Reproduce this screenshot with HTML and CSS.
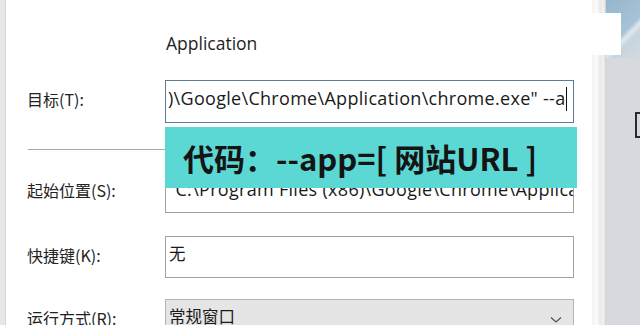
FILE: index.html
```html
<!DOCTYPE html>
<html lang="zh-CN">
<head>
  <meta charset="UTF-8">
  <title>快捷方式属性</title>
  <link rel="stylesheet" href="styles.css">
</head>
<body>
  <div class="screen">
    <div class="left-edge"></div>

    <!-- Shortcut properties panel -->
    <div class="panel">
      <div class="app-name">Application</div>

      <div class="row row-target">
        <label class="label">目标(T):</label>
        <div class="field field-focus">)\Google\Chrome\Application\chrome.exe" --a<span class="caret"></span></div>
      </div>

      <div class="separator"></div>

      <div class="row row-start">
        <label class="label">起始位置(S):</label>
        <div class="field">"C:\Program Files (x86)\Google\Chrome\Application"</div>
      </div>

      <div class="row row-key">
        <label class="label">快捷键(K):</label>
        <div class="field field-cjk">无</div>
      </div>

      <div class="row row-run">
        <label class="label">运行方式(R):</label>
        <div class="field field-cjk field-select">
          <span>常规窗口</span>
          <svg class="chevron" width="12" height="8" viewBox="0 0 12 8">
            <path d="M1 1.5 L6 6 L11 1.5" fill="none" stroke="#555" stroke-width="1.3"/>
          </svg>
        </div>
      </div>

      <!-- teal caption pasted over the screenshot -->
      <div class="caption">代码：--app=[ 网站URL ]</div>
    </div>

    <div class="frame-strip"></div>

    <div class="desktop">
      <div class="desktop-sky"></div>
      <div class="desktop-mark"></div>
    </div>

    <div class="top-patch"></div>
  </div>
</body>
</html>
```

FILE: styles.css
```css
body {
  margin: 0;
  padding: 0;
  background-color: #d7dadf;
  font-family: "Noto Sans", "Noto Sans CJK SC", sans-serif;
}

.screen {
  position: relative;
  display: flex;
  width: 640px;
  height: 325px;
  overflow: hidden;
}

.left-edge {
  width: 5px;
  background-color: #e7e7e7;
  border-right: 1px solid #d6d6d6;
}

.panel {
  position: relative;
  width: 565px;
  padding-left: 21px;
  background-color: #ffffff;
}

.app-name {
  margin: 31px 0 0 139px;
  height: 24px;
  font-family: "Open Sans", sans-serif;
  font-size: 17.5px;
  line-height: 24px;
  color: #1e1e1e;
}

.row {
  display: flex;
  align-items: flex-start;
}

.row-target {
  margin-top: 25px;
}

.row-start {
  margin-top: 21px;
}

.row-key {
  margin-top: 23px;
}

.row-run {
  margin-top: 21px;
}

.label {
  width: 138px;
  padding-top: 9px;
  font-family: "Noto Sans CJK SC", sans-serif;
  font-size: 16px;
  line-height: 20px;
  color: #222;
}

.field {
  box-sizing: border-box;
  width: 409px;
  height: 42px;
  padding: 6px 0 0 2px;
  border: 1px solid #a2a2a2;
  font-family: "Open Sans", "Noto Sans CJK SC", sans-serif;
  font-size: 18px;
  line-height: 22px;
  letter-spacing: 0.3px;
  color: #1a1a1a;
  white-space: nowrap;
  overflow: hidden;
}

.field-focus {
  height: 43px;
  border-color: #5c7b9c;
}

.field-cjk {
  padding-top: 5px;
  padding-left: 3px;
  font-family: "Noto Sans CJK SC", sans-serif;
  font-size: 16.5px;
  letter-spacing: 0;
}

.caret {
  display: inline-block;
  width: 1px;
  height: 24px;
  margin-left: 1px;
  vertical-align: -6px;
  background-color: #111;
}

.field-select {
  display: flex;
  justify-content: space-between;
  padding-right: 11px;
  background-color: #e5e5e5;
  border-color: #b4b4b4;
}

.chevron {
  margin-top: 11px;
}

.separator {
  height: 1px;
  margin: 26px 0 0 1px;
  width: 546px;
  background-color: #a8a8a8;
}

.caption {
  position: absolute;
  left: 159px;
  top: 127px;
  width: 394px;
  height: 61px;
  padding-left: 18px;
  background-color: #5cd8d4;
  font-family: "Noto Sans CJK SC", sans-serif;
  font-weight: 700;
  font-size: 31px;
  line-height: 61px;
  color: #141414;
  white-space: nowrap;
}

.frame-strip {
  width: 14px;
  background: linear-gradient(to right, #f4f4f4 0, #fbfbfb 5px, #e9e9e9 8px, #f1f1f1 12px, #c9cbce 14px);
}

.desktop {
  position: relative;
  flex: 1;
  background-color: #d6d9de;
}

.desktop-sky {
  height: 58px;
  background: linear-gradient(135deg, #94b6cd 0, #a7c3d6 55%, #dfe8ee 62%, #c6d4de 70%, #d6d9de 100%);
}

.desktop-mark {
  position: absolute;
  left: 29px;
  top: 112px;
  width: 10px;
  height: 22px;
  border: 2px solid #2a2a2a;
}

.top-patch {
  position: absolute;
  left: 560px;
  top: 13px;
  width: 61px;
  height: 42px;
  background-color: #ffffff;
}
```
